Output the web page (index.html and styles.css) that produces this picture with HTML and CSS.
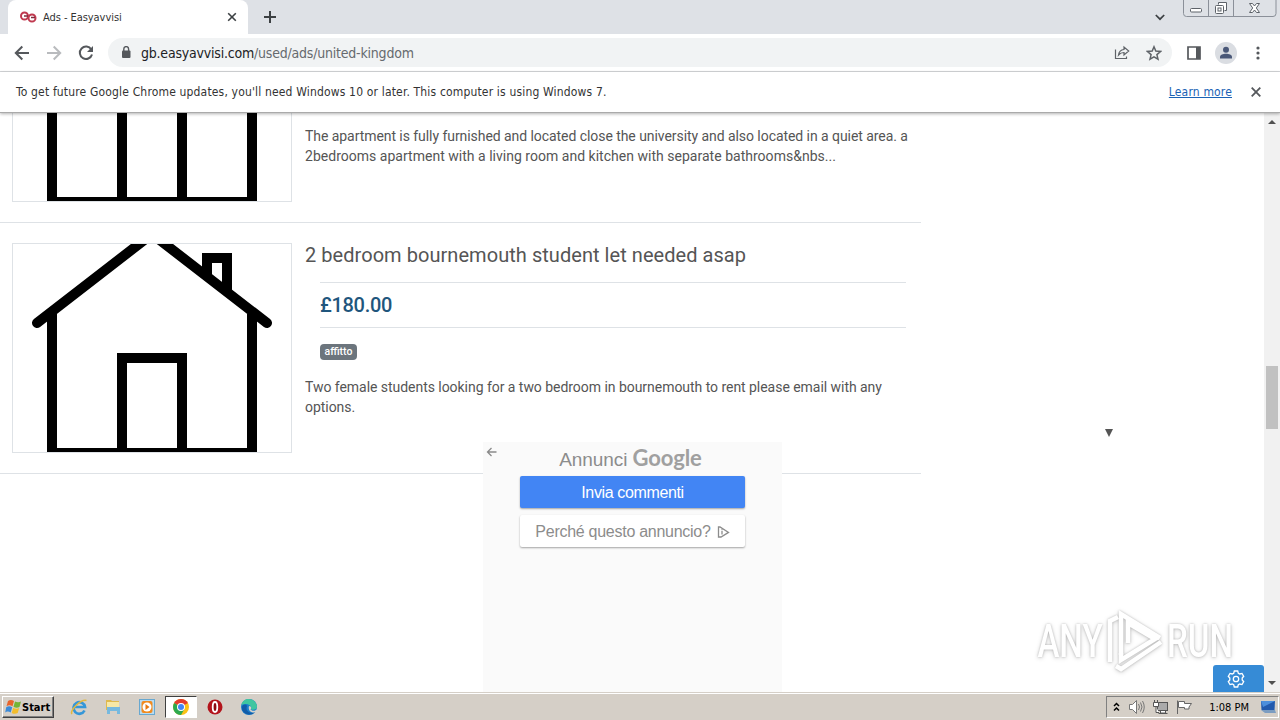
FILE: index.html
```html
<!DOCTYPE html>
<html lang="en">
<head>
    <meta charset="UTF-8">
    <title>Ads - Easyavvisi</title>
    <link rel="stylesheet" href="styles.css">
</head>
<body>
    <div class="tabstrip">
        <div class="tab">
            <svg class="favicon" width="17" height="12" viewBox="0 0 17 12" fill="none" stroke="#c0394f" stroke-width="2">
                <ellipse cx="4.500" cy="5" rx="3.500" ry="3.600"/>
                <ellipse cx="12" cy="7" rx="3.500" ry="3.600"/>
                <path d="M4 5h4M11 6.500h4" stroke="#7d2b3c" stroke-width="1.700"/>
            </svg>
            <span class="tab-title">Ads - Easyavvisi</span>
            <svg width="10" height="10" viewBox="0 0 10 10" stroke="#3c4043" stroke-width="1.6"><path d="M1.2 1.2l7.6 7.6M8.8 1.2L1.2 8.8"/></svg>
        </div>
        <svg class="new-tab" width="12" height="12" viewBox="0 0 12 12" stroke="#3c4043" stroke-width="2"><path d="M6 0v12M0 6h12"/></svg>
        <svg class="tab-search" width="10" height="7" viewBox="0 0 10 7" fill="none" stroke="#3c4043" stroke-width="1.7"><path d="M.8 1L5 5.2 9.2 1"/></svg>
        <svg class="window-buttons" width="94" height="17" viewBox="0 0 94 17" fill="none" stroke="#8b9099">
            <path d="M.5 0v13.500q0 3 3 3h86.500q3 0 3-3V0M25.500 0v16M50.500 0v16"/>
            <g stroke="#5d6269">
                <rect x="7.500" y="8.500" width="11" height="3.500" rx="1" fill="#fff"/>
                <path d="M35.500 4.500v-2h8v8h-2" fill="#fff"/>
                <rect x="32.500" y="5.500" width="8" height="8" rx="1" fill="#fff"/>
                <rect x="35" y="8" width="3" height="3"/>
                <path d="M66.500 3.500h3l2 2.500 2-2.500h3L73.300 8l3.200 4.500h-3l-2-2.500-2 2.500h-3L69.700 8z" fill="#fff"/>
            </g>
        </svg>
    </div>

    <div class="toolbar">
        <svg class="nav" width="16" height="16" viewBox="0 0 16 16" fill="none" stroke="#55585c" stroke-width="2"><path d="M15 8H2M8.300 1.500L1.800 8l6.500 6.500"/></svg>
        <svg class="nav" width="16" height="16" viewBox="0 0 16 16" fill="none" stroke="#b9bbbe" stroke-width="2"><path d="M1 8h13M7.700 1.500L14.200 8l-6.500 6.500"/></svg>
        <svg class="nav" width="16" height="16" viewBox="0 0 16 16" fill="none" stroke="#55585c" stroke-width="2"><path d="M13.300 4.500A6.200 6.200 0 1 0 14 9.500"/><path d="M15 1v6H9z" fill="#55585c" stroke="none"/></svg>
        <div class="omnibox">
            <svg width="10" height="13" viewBox="0 0 10 13"><rect x="1" y="4.500" width="8.500" height="7.500" rx="1" fill="#55585c"/><path d="M2.800 5V3a2.400 2.400 0 0 1 4.800 0v2" fill="none" stroke="#55585c" stroke-width="1.400"/></svg>
            <span class="url"><span class="host">gb.easyavvisi.com</span><span class="path">/used/ads/united-kingdom</span></span>
            <svg class="share" width="16" height="15" viewBox="0 0 16 15" fill="none" stroke="#5f6368" stroke-width="1.200"><path d="M1.500 4.500v9h11v-2"/><path d="M4.500 10C5 6.300 7 4.700 10 4.500V2l4.700 4-4.700 4V7.500c-2.400 0-4 .7-5.500 2.500z"/></svg>
            <svg width="16" height="16" viewBox="0 0 16 16" fill="none" stroke="#5f6368" stroke-width="1.500"><path d="M8 1.800l1.800 4.300 4.700.4-3.600 3.100 1.100 4.600L8 11.800l-4 2.400 1.100-4.600L1.500 6.500l4.700-.4z"/></svg>
        </div>
        <svg class="panel" width="14" height="14" viewBox="0 0 14 14"><path d="M1 1h12v12H1z" fill="none" stroke="#55585c" stroke-width="1.700"/><path d="M9 1h4v12H9z" fill="#55585c"/></svg>
        <svg class="avatar" width="22" height="22" viewBox="0 0 22 22"><circle cx="11" cy="11" r="11" fill="#dadde2"/><circle cx="11" cy="7.700" r="3" fill="#4a5878"/><path d="M5 16.500v-1.600c0-2.200 3-3.200 6-3.200s6 1 6 3.200v1.600z" fill="#4a5878"/></svg>
        <svg class="menu" width="4" height="14" viewBox="0 0 4 14" fill="#55585c"><circle cx="2" cy="2" r="1.600"/><circle cx="2" cy="7" r="1.600"/><circle cx="2" cy="12" r="1.600"/></svg>
    </div>

    <div class="infobar">
        <span class="message">To get future Google Chrome updates, you'll need Windows 10 or later. This computer is using Windows 7.</span>
        <a class="learn-more">Learn more</a>
        <svg width="10" height="10" viewBox="0 0 10 10" stroke="#55585c" stroke-width="1.800"><path d="M.7.700l8.600 8.600M9.300.700L.7 9.300"/></svg>
    </div>

    <div class="page">
        <main class="listing">
            <article class="ad cut">
                <svg class="photo" viewBox="0 0 278 88" fill="none" stroke="#000" stroke-width="10">
                    <path d="M39 -10V89H239V-10M109 -10V89M169 -10V89"/>
                </svg>
                <div class="text">
                    <p>The apartment is fully furnished and located close the university and also located in a quiet area. a <span class="loose">2bedrooms apartment with a living room and kitchen with separate bathrooms&amp;nbs...</span></p>
                </div>
            </article>
            <article class="ad">
                <svg class="photo" viewBox="0 0 278 208" fill="none" stroke="#000" stroke-width="10">
                    <path d="M39 70V209H239V70M109 209V114H169V209M194 34V14H214V48"/>
                    <path d="M24 79L139 -10L254 79" stroke-linecap="round"/>
                </svg>
                <div class="text">
                    <h2>2 bedroom bournemouth student let needed asap</h2>
                    <div class="price">£180.00</div>
                    <span class="badge">affitto</span>
                    <p>Two female students looking for a two bedroom in bournemouth to rent please email with any options.</p>
                </div>
            </article>
        </main>
        <div class="scrollbar">
            <i class="arrow up"></i>
            <i class="thumb"></i>
            <i class="arrow down"></i>
        </div>

        <div class="google-ad">
            <svg class="back" width="11" height="10" viewBox="0 0 11 10" fill="none" stroke="#8a8a8a" stroke-width="1.300"><path d="M10.500 5H1.500M5.500 1l-4 4 4 4"/></svg>
            <div class="brand">Annunci <b>Google</b></div>
            <div class="btn primary">Invia commenti</div>
            <div class="btn">Perché questo annuncio?
                <svg width="13" height="12" viewBox="0 0 13 12" fill="none" stroke="#8c8c8c" stroke-width="1.300"><path d="M1.500 1v10H4l7.500-4.600L3 1z"/><path d="M5 5v3.500M5 3.200v1"/></svg>
            </div>
        </div>
        <i class="caret"></i>
        <div class="watermark">
            <span>ANY</span>
            <svg width="58" height="64" viewBox="0 0 58 64" fill="none" stroke="#fff" stroke-width="4.500">
                <path d="M4 53V12l8-4"/>
                <path d="M15 46V5l39 24"/>
                <path d="M15 44v7l34-21L22 14v20"/>
                <path d="M55 33L15 60l-5-3"/>
            </svg>
            <span>RUN</span>
        </div>
        <div class="settings">
            <svg width="18" height="18" viewBox="0 0 18 18" fill="none" stroke="#fff" stroke-width="1.300"><path d="M7.300 1h3.400l.6 2.200 1.500.8 2.200-.6 1.700 2.900L15.200 8v2l1.500 1.700-1.700 2.900-2.200-.6-1.500.8-.6 2.200H7.300l-.6-2.200-1.500-.8-2.200.6-1.700-2.900L2.800 10V8L1.300 6.300 3 3.400l2.200.6 1.500-.8z"/><circle cx="9" cy="9" r="2.700"/></svg>
        </div>
    </div>

    <div class="taskbar">
        <div class="start">
            <svg width="17" height="16" viewBox="0 0 17 16">
                <path d="M3 2c2-1.500 4-1.300 6 0L7.500 7.200c-2-1.200-4-1.300-6 0z" fill="#e8642c"/>
                <path d="M10 2.500c2 1 4 1.100 6 0L14.500 8c-2 1-4 .9-6-.2z" fill="#74b437"/>
                <path d="M1.200 8.300c2-1.300 4-1.200 6 0L5.700 13.500c-2-1.200-4-1.200-5.500 0z" fill="#3b8ad8"/>
                <path d="M8.200 8.800c2 1.100 4 1.200 6 .2l-1.500 5c-2 1.200-4 1-6-.1z" fill="#f3bd2c"/>
            </svg>
            Start
        </div>
        <div class="launch">
            <svg width="18" height="18" viewBox="0 0 18 18" fill="none"><path d="M14.500 12.500A5.800 5.800 0 1 1 15 9H5" stroke="#3597d8" stroke-width="2.700"/><path d="M2 16C-1 13 11 1 16.500 2.500" stroke="#e3b83e" stroke-width="1.500"/></svg>
        </div>
        <div class="launch">
            <svg width="18" height="18" viewBox="0 0 18 18"><path d="M2 2h5l1 1h7v9H2z" fill="#dfb94e"/><path d="M3 4h12v6H3z" fill="#f7e8a6"/><path d="M3 16V9h13v7h-3v-3H6v3z" fill="#76b9df"/></svg>
        </div>
        <div class="launch">
            <svg width="18" height="18" viewBox="0 0 18 18"><rect x="1.500" y="1.500" width="15" height="15" fill="#b9dcf2" stroke="#68a8d0"/><rect x="3.500" y="3" width="11" height="12" rx="2" fill="#f18b20"/><circle cx="9" cy="9" r="4.500" fill="#fff"/><path d="M7.500 6v6l4-3z" fill="#e8780f"/></svg>
        </div>
        <div class="launch active">
            <svg width="16" height="16" viewBox="0 0 16 16"><circle cx="8" cy="8" r="8" fill="#fbc116"/><path d="M8 8L1.100 4A8 8 0 0 1 14.900 4z" fill="#e33b2e"/><path d="M8 8L1.100 4A8 8 0 0 0 8 16l3.500-6z" fill="#2da94f"/><circle cx="8" cy="8" r="4" fill="#fff"/><circle cx="8" cy="8" r="3" fill="#4285f4"/></svg>
        </div>
        <div class="launch">
            <svg width="18" height="18" viewBox="0 0 18 18"><circle cx="9" cy="9" r="7.500" fill="#b3141c"/><ellipse cx="9" cy="9" rx="2.300" ry="5" fill="#8d0b12" stroke="#fff" stroke-width="1.800"/></svg>
        </div>
        <div class="launch">
            <svg width="18" height="18" viewBox="0 0 18 18"><circle cx="9" cy="9" r="8" fill="#1b7fcc"/><path d="M1.500 7C3-1 15-1 17 8c.3 3-3 4.500-6 3.500 1.500-4-4-7-9.500-4.500z" fill="#3fc6a0"/><path d="M7 8c-2 5 3 8 8 6-4 5-14 2-13-5 1-3 4-3 5-1z" fill="#125ca8"/><path d="M9 8c2 0 3 2 1.500 3.500 2 2 5 1.300 6.500 0L18 14l-4 .5c-4 0-6-3-5-6.500z" fill="#d6d2ca"/></svg>
        </div>
        <div class="tray">
            <svg class="chevrons" width="7" height="10" viewBox="0 0 7 10" fill="none" stroke="#000" stroke-width="1.500"><path d="M1 4l2.500-2.500L6 4M1 8.500L3.500 6 6 8.500"/></svg>
            <svg width="17" height="16" viewBox="0 0 17 16" fill="#fff" stroke="#777"><path d="M1.500 5.500h3l4-4v13l-4-4h-3z"/><path d="M10.500 5q2 3 0 6M12.500 3.500q3 4.500 0 9M14.500 2q3.500 6 0 12" fill="none"/></svg>
            <svg width="17" height="16" viewBox="0 0 17 16" fill="#fff" stroke="#555"><rect x="5.500" y="3.500" width="10" height="8" fill="#aaa"/><path d="M1.500 3.500h5v4h-5zM2.500 1v2M5.500 1v2M4 7.500v6h3M8.500 12v2h5v-2M6.500 14.500h9"/></svg>
            <svg width="17" height="16" viewBox="0 0 17 16" fill="#fff" stroke="#666"><path d="M1.500 15V1.500M2.500 2.500h6v2h7l-2.500 3.500v2H8.500V8.500h-6z"/></svg>
            <span class="clock">1:08 PM</span>
            <svg class="desktop" width="16" height="14" viewBox="0 0 16 14"><path d="M1 1h14l-.5 9H1.500z" fill="#2259ad"/><path d="M1 1h14L3 7z" fill="#4c8edc"/><path d="M1 10h14l1 3H5z" fill="#7c9dc1"/></svg>
        </div>
    </div>
</body>
</html>
```
FILE: styles.css
```css
* {
    box-sizing: border-box;
}
body {
    margin: 0;
    width: 1280px;
    height: 720px;
    overflow: hidden;
    display: flex;
    flex-direction: column;
    font-family: "DejaVu Sans Condensed", "Noto Sans", sans-serif;
    background: #fff;
}
svg {
    display: block;
    flex: none;
}

/* browser */
.tabstrip {
    height: 34px;
    flex: none;
    display: flex;
    background: #dee1e6;
    padding-left: 8px;
}
.tab {
    width: 240px;
    display: flex;
    align-items: center;
    padding: 0 11px 0 12px;
    background: #fff;
    border-radius: 8px 8px 0 0;
}
.tab-title {
    flex: 1;
    margin-left: 6px;
    font-size: 11px;
    letter-spacing: -.06px;
    color: #333;
}
.new-tab {
    margin: 11px 0 0 16px;
}
.tab-search {
    margin: 14px 18px 0 auto;
}
.window-buttons {
    margin-right: 3px;
}
.toolbar {
    height: 38px;
    flex: none;
    display: flex;
    align-items: center;
    padding: 0 20px 0 14px;
    border-bottom: 1px solid #d5d7da;
}
.nav {
    margin-right: 16px;
}
.omnibox {
    width: 1065px;
    height: 29px;
    margin-left: -2px;
    display: flex;
    align-items: center;
    padding: 0 10px 0 13px;
    border-radius: 15px;
    background: #f1f3f4;
}
.url {
    flex: 1;
    margin-left: 10px;
    font-size: 14px;
    letter-spacing: -.21px;
    color: #666a6e;
}
.host {
    color: #202124;
}
.share {
    margin-right: 16px;
}
.panel {
    margin-left: 15px;
}
.avatar {
    margin-left: 14px;
}
.menu {
    margin-left: 19px;
}
.infobar {
    height: 41px;
    flex: none;
    display: flex;
    align-items: center;
    padding: 0 19px 0 16px;
    font-size: 12px;
    letter-spacing: .165px;
    color: #333;
    border-bottom: 1px solid #aaa;
    position: relative;
    z-index: 1;
    box-shadow: 0 1px 3px rgba(0, 0, 0, .3);
}
.message {
    flex: 1;
}
.learn-more {
    margin-right: 19px;
    color: #1a62b5;
    text-decoration: underline;
}

/* ads list */
.page {
    height: 579px;
    flex: none;
    display: flex;
    justify-content: space-between;
    position: relative;
    font-family: Roboto, sans-serif;
    color: #555;
}
.listing {
    width: 921px;
}
.ad {
    height: 251px;
    display: flex;
    padding: 20px 12px;
    border-bottom: 1px solid #dee2e6;
}
.photo {
    width: 280px;
    height: 210px;
    margin-right: 13px;
    border: 1px solid #dee2e6;
}
.text {
    flex: 1;
}
.ad h2 {
    margin: 0;
    font-size: 20px;
    font-weight: 400;
    letter-spacing: .05px;
    line-height: 24px;
}
.price {
    height: 46px;
    margin: 15px 3px 0 15px;
    border-top: 1px solid #dee2e6;
    border-bottom: 1px solid #dee2e6;
    font-size: 20px;
    font-weight: 500;
    letter-spacing: -.3px;
    line-height: 45px;
    color: #1f567d;
}
.badge {
    display: block;
    width: 37px;
    height: 16px;
    margin: 16px 0 17px 15px;
    border-radius: 4px;
    background: #6c757d;
    color: #fff;
    font-size: 10.5px;
    font-weight: 500;
    line-height: 15px;
    text-align: center;
}
.ad p {
    margin: 0;
    font-size: 14px;
    letter-spacing: -.04px;
    line-height: 20px;
}
.ad.cut {
    height: 110px;
    padding-top: 0;
}
.cut .photo {
    height: 89px;
    border-top: 0;
}
.ad.cut p {
    margin-top: 13px;
    letter-spacing: -.06px;
}
.loose {
    letter-spacing: .02px;
}
.scrollbar {
    width: 16px;
    background: #f1f1f1;
    display: flex;
    flex-direction: column;
    align-items: center;
}
.arrow {
    border: 4px solid transparent;
}
.up {
    margin-top: 3px;
    border-bottom-color: #505050;
}
.down {
    margin: auto 0 3px;
    border-top-color: #505050;
}
.thumb {
    width: 12px;
    height: 63px;
    margin-top: 242px;
    background: #c1c1c1;
}

/* overlays */
.google-ad {
    position: absolute;
    left: 483px;
    bottom: 0;
    width: 299px;
    height: 250px;
    padding: 4px 37px;
    background: #fafafa;
    font-family: "Liberation Sans", Arial, sans-serif;
    color: #8c8c8c;
}
.back {
    position: absolute;
    left: 3px;
    top: 5px;
}
.brand {
    height: 30px;
    padding-right: 4px;
    font-size: 19px;
    letter-spacing: -.1px;
    line-height: 23px;
    text-align: center;
    white-space: nowrap;
}
.brand b {
    font-family: Lato, sans-serif;
    font-size: 22px;
    color: #a0a0a0;
}
.btn {
    height: 32px;
    margin-bottom: 7px;
    padding-top: 2px;
    display: flex;
    align-items: center;
    justify-content: center;
    gap: 6px;
    border-radius: 2px;
    background: #fff;
    font-size: 16px;
    letter-spacing: -.27px;
    white-space: nowrap;
    box-shadow: 0 1px 2px rgba(0, 0, 0, .35);
}
.primary {
    background: #4285f4;
    color: #fff;
    letter-spacing: -.37px;
}
.caret {
    position: absolute;
    left: 1105px;
    top: 316px;
    border: 4.5px solid transparent;
    border-top: 8px solid #555;
    border-bottom: 0;
}
.watermark {
    position: absolute;
    left: 1038px;
    top: 496px;
    width: 194px;
    height: 64px;
    display: flex;
    align-items: center;
    justify-content: space-between;
    color: #fff;
    font-size: 46px;
    font-weight: 500;
    filter: drop-shadow(0 0 1px rgba(0, 0, 0, .2)) drop-shadow(0 1px 2px rgba(0, 0, 0, .18));
}
.watermark span {
    width: 64px;
    transform: scaleX(.72);
    display: flex;
    justify-content: center;
}
.settings {
    position: absolute;
    right: 16px;
    bottom: 0;
    width: 51px;
    height: 27px;
    padding: 5px 0 0 14px;
    border-radius: 3px 3px 0 0;
    background: #368bd6;
}

/* windows taskbar */
.taskbar {
    height: 28px;
    flex: none;
    display: flex;
    align-items: center;
    padding: 1px 1px 0 2px;
    background: #d5cfc7;
    border-top: 1px solid #d5cfc7;
    box-shadow: inset 0 1px #fff;
}
.start {
    width: 52px;
    height: 22px;
    display: flex;
    align-items: center;
    padding-left: 2px;
    margin-right: 9px;
    border: 1px solid;
    border-color: #fff #404040 #404040 #fff;
    box-shadow: inset -1px -1px #808080;
    font-size: 11px;
    font-weight: 700;
    color: #000;
}
.launch {
    width: 32px;
    height: 22px;
    margin-right: 2px;
    display: flex;
    align-items: center;
    justify-content: center;
}
.active {
    background: #fff;
    border: 1px solid;
    border-color: #404040 #fff #fff #404040;
}
.tray {
    width: 173px;
    height: 22px;
    margin-left: auto;
    display: flex;
    align-items: center;
    padding-left: 6px;
    border: 1px solid;
    border-color: #808080 #fff #fff #808080;
    gap: 7px;
}
.chevrons {
    margin-right: 1px;
}
.clock {
    margin-left: auto;
    font-size: 11px;
    color: #000;
}
.desktop {
    margin: 0 2px 0 4px;
}
```
